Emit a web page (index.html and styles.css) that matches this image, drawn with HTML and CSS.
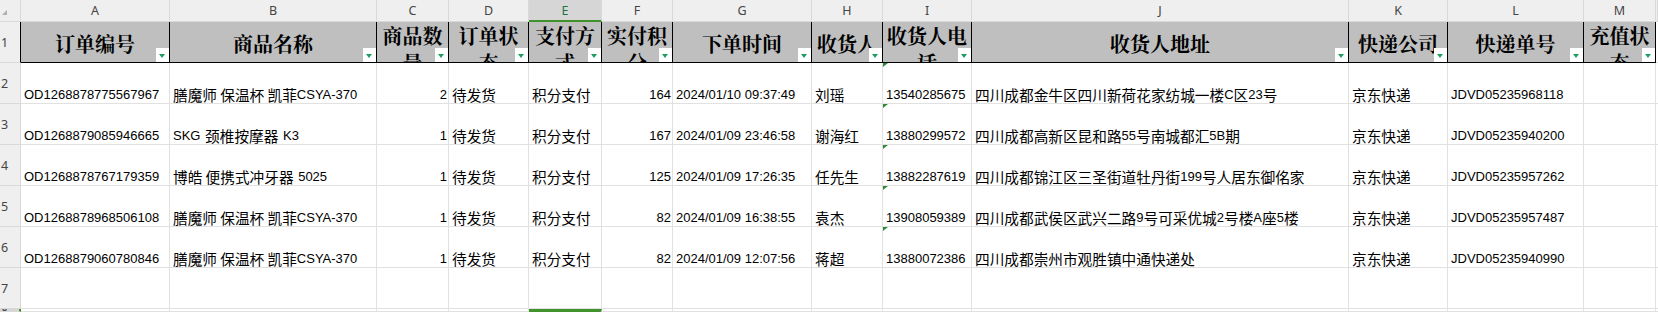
FILE: index.html
```html
<!DOCTYPE html>
<html lang="zh-CN">
<head>
<meta charset="utf-8">
<title>订单表</title>
<link rel="stylesheet" href="styles.css">
</head>
<body>
<div class="sheet">
  <div class="row">
    <div class="c corner"></div>
    <div class="c ch">A</div><div class="c ch">B</div><div class="c ch">C</div><div class="c ch">D</div>
    <div class="c ch sel">E</div><div class="c ch">F</div><div class="c ch">G</div><div class="c ch">H</div>
    <div class="c ch">I</div><div class="c ch">J</div><div class="c ch">K</div><div class="c ch">L</div>
    <div class="c ch">M</div><div class="c ch"></div>
  </div>
  <div class="row">
    <div class="c rh top">1</div>
    <div class="c h">订单编号<span class="f"></span></div>
    <div class="c h">商品名称<span class="f"></span></div>
    <div class="c h w">商品数量<span class="f"></span></div>
    <div class="c h w">订单状态<span class="f"></span></div>
    <div class="c h w">支付方式<span class="f"></span></div>
    <div class="c h w">实付积分<span class="f"></span></div>
    <div class="c h">下单时间<span class="f"></span></div>
    <div class="c h">收货人<span class="f"></span></div>
    <div class="c h w">收货人电话<span class="f"></span></div>
    <div class="c h">收货人地址<span class="f"></span></div>
    <div class="c h">快递公司<span class="f"></span></div>
    <div class="c h">快递单号<span class="f"></span></div>
    <div class="c h w">充值状态<span class="f"></span></div>
    <div class="c"></div>
  </div>
  <div class="row">
    <div class="c rh">2</div>
    <div class="c"><span class="l">OD1268878775567967</span></div>
    <div class="c">膳魔师 保温杯 凯菲<span class="l">CSYA-370</span></div>
    <div class="c r"><span class="l">2</span></div>
    <div class="c">待发货</div>
    <div class="c">积分支付</div>
    <div class="c r"><span class="l">164</span></div>
    <div class="c"><span class="l">2024/01/10 09:37:49</span></div>
    <div class="c">刘瑶</div>
    <div class="c tri"><span class="l">13540285675</span></div>
    <div class="c">四川成都金牛区四川新荷花家纺城一楼<span class="l">C</span>区<span class="l">23</span>号</div>
    <div class="c">京东快递</div>
    <div class="c"><span class="l">JDVD05235968118</span></div>
    <div class="c"></div><div class="c"></div>
  </div>
  <div class="row">
    <div class="c rh">3</div>
    <div class="c"><span class="l">OD1268879085946665</span></div>
    <div class="c"><span class="l">SKG</span><span class="l sp">&nbsp;</span>颈椎按摩器<span class="l sp">&nbsp;K3</span></div>
    <div class="c r"><span class="l">1</span></div>
    <div class="c">待发货</div>
    <div class="c">积分支付</div>
    <div class="c r"><span class="l">167</span></div>
    <div class="c"><span class="l">2024/01/09 23:46:58</span></div>
    <div class="c">谢海红</div>
    <div class="c tri"><span class="l">13880299572</span></div>
    <div class="c">四川成都高新区昆和路<span class="l">55</span>号南城都汇<span class="l">5B</span>期</div>
    <div class="c">京东快递</div>
    <div class="c"><span class="l">JDVD05235940200</span></div>
    <div class="c"></div><div class="c"></div>
  </div>
  <div class="row">
    <div class="c rh">4</div>
    <div class="c"><span class="l">OD1268878767179359</span></div>
    <div class="c">博皓 便携式冲牙器<span class="l sp">&nbsp;5025</span></div>
    <div class="c r"><span class="l">1</span></div>
    <div class="c">待发货</div>
    <div class="c">积分支付</div>
    <div class="c r"><span class="l">125</span></div>
    <div class="c"><span class="l">2024/01/09 17:26:35</span></div>
    <div class="c">任先生</div>
    <div class="c tri"><span class="l">13882287619</span></div>
    <div class="c">四川成都锦江区三圣街道牡丹街<span class="l">199</span>号人居东御佲家</div>
    <div class="c">京东快递</div>
    <div class="c"><span class="l">JDVD05235957262</span></div>
    <div class="c"></div><div class="c"></div>
  </div>
  <div class="row">
    <div class="c rh">5</div>
    <div class="c"><span class="l">OD1268878968506108</span></div>
    <div class="c">膳魔师 保温杯 凯菲<span class="l">CSYA-370</span></div>
    <div class="c r"><span class="l">1</span></div>
    <div class="c">待发货</div>
    <div class="c">积分支付</div>
    <div class="c r"><span class="l">82</span></div>
    <div class="c"><span class="l">2024/01/09 16:38:55</span></div>
    <div class="c">袁杰</div>
    <div class="c tri"><span class="l">13908059389</span></div>
    <div class="c">四川成都武侯区武兴二路<span class="l">9</span>号可采优城<span class="l">2</span>号楼<span class="l">A</span>座<span class="l">5</span>楼</div>
    <div class="c">京东快递</div>
    <div class="c"><span class="l">JDVD05235957487</span></div>
    <div class="c"></div><div class="c"></div>
  </div>
  <div class="row">
    <div class="c rh">6</div>
    <div class="c"><span class="l">OD1268879060780846</span></div>
    <div class="c">膳魔师 保温杯 凯菲<span class="l">CSYA-370</span></div>
    <div class="c r"><span class="l">1</span></div>
    <div class="c">待发货</div>
    <div class="c">积分支付</div>
    <div class="c r"><span class="l">82</span></div>
    <div class="c"><span class="l">2024/01/09 12:07:56</span></div>
    <div class="c">蒋超</div>
    <div class="c tri"><span class="l">13880072386</span></div>
    <div class="c">四川成都崇州市观胜镇中通快递处</div>
    <div class="c">京东快递</div>
    <div class="c"><span class="l">JDVD05235940990</span></div>
    <div class="c"></div><div class="c"></div>
  </div>
  <div class="row">
    <div class="c rh">7</div>
    <div class="c"></div><div class="c"></div><div class="c"></div><div class="c"></div>
    <div class="c"></div><div class="c"></div><div class="c"></div><div class="c"></div>
    <div class="c"></div><div class="c"></div><div class="c"></div><div class="c"></div>
    <div class="c"></div><div class="c"></div>
  </div>
  <div class="row">
    <div class="c rh sel">8</div>
    <div class="c"></div><div class="c"></div><div class="c"></div><div class="c"></div>
    <div class="c active"></div><div class="c"></div><div class="c"></div><div class="c"></div>
    <div class="c"></div><div class="c"></div><div class="c"></div><div class="c"></div>
    <div class="c"></div><div class="c"></div>
  </div>
</div>
</body>
</html>
```
FILE: styles.css
```css
html, body {
  margin: 0;
  padding: 0;
  background: #fff;
}
body {
  width: 1658px;
  height: 312px;
  overflow: hidden;
  font-family: "Noto Sans CJK SC", sans-serif;
}
.sheet {
  display: grid;
  grid-template-columns: 21px 149px 207px 72px 80px 73px 71px 139px 71px 89px 377px 99px 136px 72px 2px;
  grid-template-rows: 22px repeat(7, 41px) 3px;
}
.row {
  display: contents;
}
.c {
  box-sizing: border-box;
  position: relative;
  display: flex;
  align-items: flex-end;
  padding: 0 3px;
  border-right: 1px solid #e1e1e1;
  border-bottom: 1px solid #e1e1e1;
  font-size: 14.67px;
  line-height: 17px;
  color: #000;
  white-space: nowrap;
  overflow: hidden;
}
.c.r {
  justify-content: flex-end;
  padding-right: 1px;
}
.l {
  font-family: "Liberation Sans", sans-serif;
  font-size: 13px;
}
.sp {
  padding-left: 1px;
}
/* column letters */
.ch, .corner, .rh {
  background: #efefef;
  border-right-color: #d9d9d9;
  border-bottom-color: #d9d9d9;
  font-family: "Noto Sans", sans-serif;
  font-size: 12.5px;
  color: #444;
  align-items: center;
}
.ch {
  justify-content: center;
  padding: 0;
}
.ch.sel {
  background: #d6d6d6;
  color: #217346;
  border-bottom: 2px solid #40922c;
}
.corner::after {
  content: "";
  position: absolute;
  left: 2px;
  top: 10px;
  width: 0;
  height: 0;
  border-left: 5px solid transparent;
  border-bottom: 5px solid #b0b0b0;
}
.rh {
  padding: 0 0 0 1px;
}
.rh.top {
  border-right-color: #000;
}
.rh.sel {
  background: #d6d6d6;
  border-right: 2px solid #40922c;
}
/* header row */
.h {
  background: #bfbfbf;
  border-right-color: #000;
  border-bottom-color: #000;
  font-family: "Noto Serif CJK SC", "Noto Sans CJK SC", serif;
  font-weight: 700;
  font-size: 20px;
  line-height: 27px;
  white-space: normal;
  text-align: center;
  justify-content: center;
  align-items: center;
  padding: 3px 0 0;
}
.h.w {
  align-items: flex-start;
  padding-top: 0;
}
.f {
  position: absolute;
  right: 0;
  bottom: 0;
  width: 13px;
  height: 14px;
  background: #fff;
}
.f::after {
  content: "";
  position: absolute;
  left: 3px;
  top: 6px;
  width: 0;
  height: 0;
  border-left: 3.5px solid transparent;
  border-right: 3.5px solid transparent;
  border-top: 4px solid #1d9f62;
}
.tri::before {
  content: "";
  position: absolute;
  left: 0;
  top: 0;
  width: 0;
  height: 0;
  border-top: 4px solid #2f8a35;
  border-right: 5px solid transparent;
}
.active {
  border-top: 3px solid #40922c;
}
```
